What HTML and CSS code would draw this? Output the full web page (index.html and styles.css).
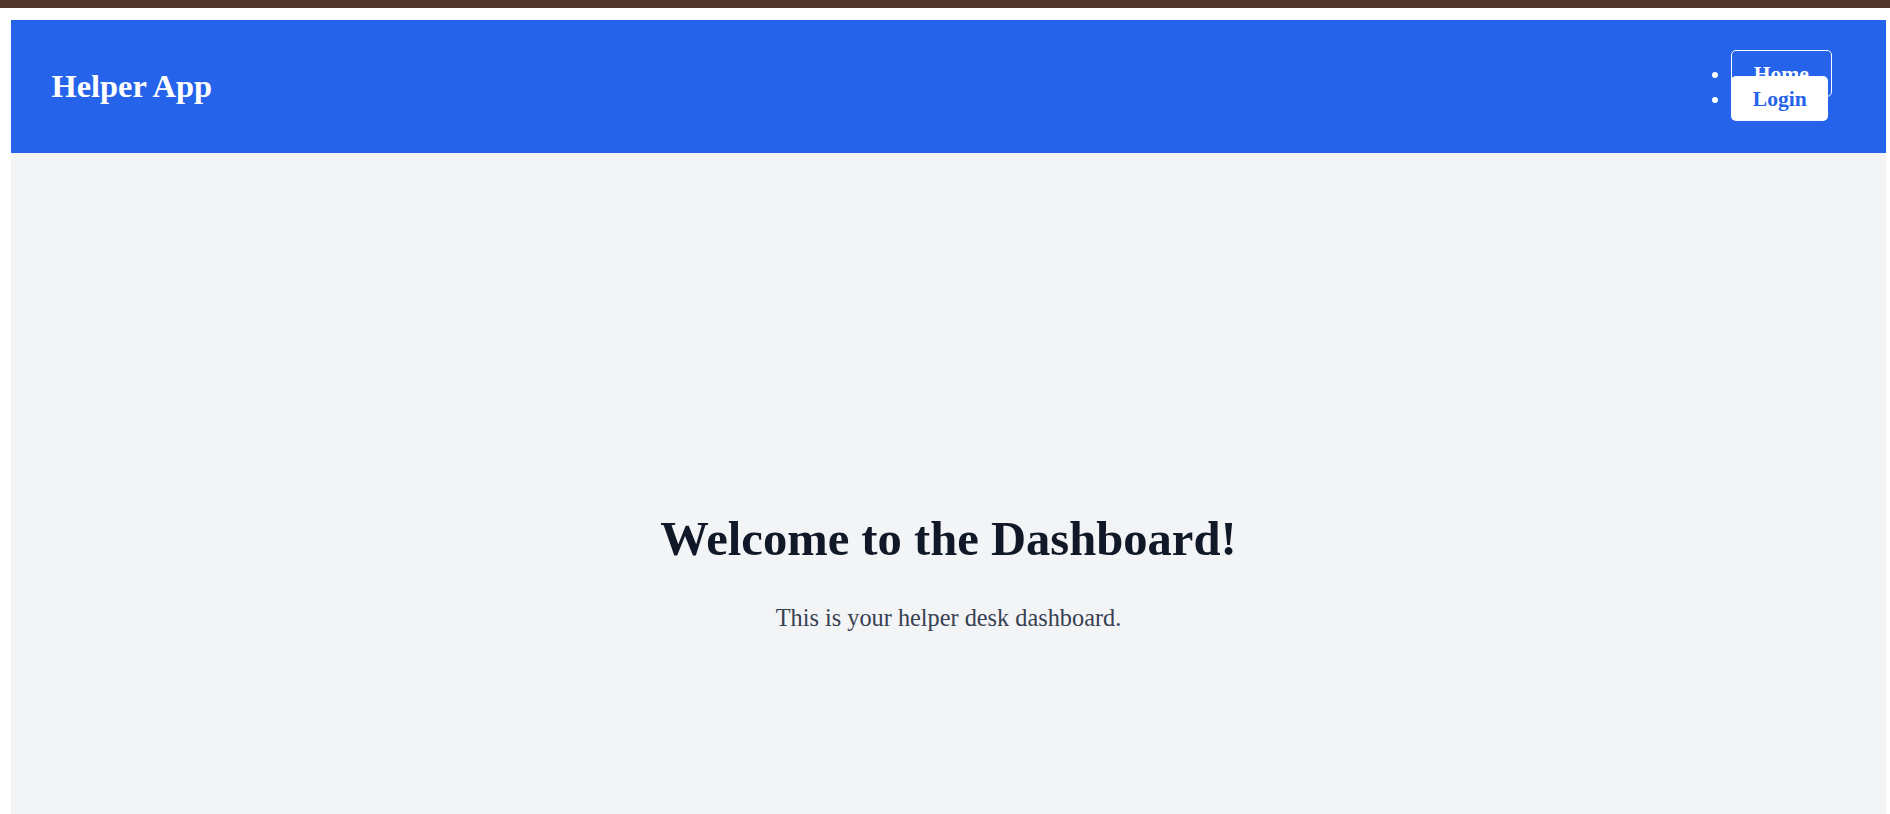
FILE: index.html
```html
<!DOCTYPE html>
<html lang="en">
<head>
<meta charset="utf-8">
<title>Helper App</title>
<link rel="stylesheet" href="styles.css">
</head>
<body>
<div class="topbar"></div>
<div class="page">
  <header class="header">
    <h1 class="brand">Helper App</h1>
    <nav>
      <ul class="nav-list">
        <li><a class="nav-link nav-home" href="#">Home</a></li>
        <li><a class="nav-link nav-login" href="#">Login</a></li>
      </ul>
    </nav>
  </header>
  <main class="main">
    <h2 class="title">Welcome to the Dashboard!</h2>
    <p class="subtitle">This is your helper desk dashboard.</p>
  </main>
</div>
</body>
</html>
```
FILE: styles.css
```css
html, body {
  margin: 0;
  padding: 0;
  background: #ffffff;
  font-family: "Liberation Serif", "Times New Roman", serif;
  overflow: hidden;
}

.topbar {
  height: 8px;
  background: #50362c;
}

.page {
  padding: 12px 4px 0 11px;
}

.header {
  box-sizing: border-box;
  height: 133px;
  padding: 0 40.5px;
  background: #2563eb;
  display: flex;
  align-items: center;
  justify-content: space-between;
}

.brand {
  margin: 0;
  font-size: 32.4px;
  font-weight: 700;
  color: #ffffff;
}

.nav-list {
  margin: 0 14px 0 0;
  padding-left: 52px;
  list-style: disc;
  color: #ffffff;
  font-size: 21.6px;
  font-weight: 700;
}

.nav-link {
  text-decoration: none;
  padding: 10.8px 21.6px;
  border-radius: 5px;
}

.nav-home {
  color: #ffffff;
  border: 1.5px solid #ffffff;
}

.nav-login {
  color: #2563eb;
  background: #ffffff;
}

.main {
  box-sizing: border-box;
  height: 661px;
  padding-top: 358px;
  background: #f3f4f6;
  text-align: center;
}

.title {
  margin: 0;
  font-size: 48.6px;
  font-weight: 700;
  color: #111827;
}

.subtitle {
  margin: 37px 0 0;
  font-size: 24.3px;
  color: #374151;
}
```
